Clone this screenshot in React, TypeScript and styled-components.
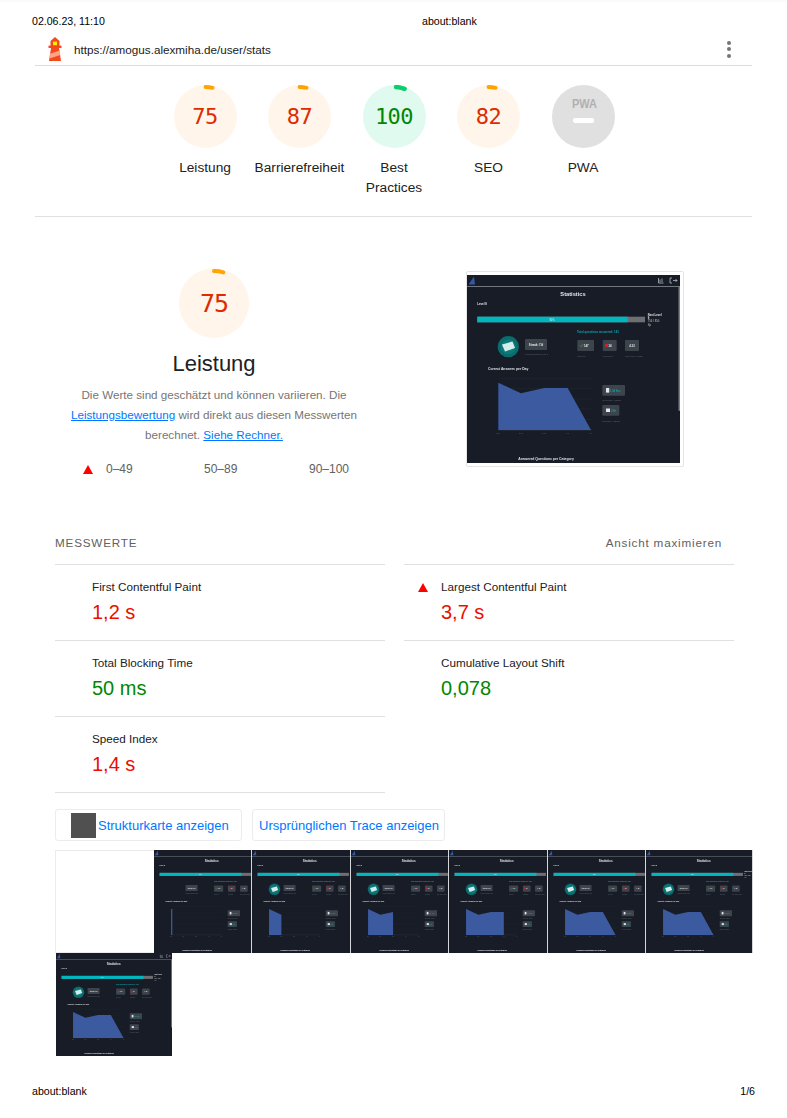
import React from "react";
import styled, { createGlobalStyle } from "styled-components";

const Global = createGlobalStyle`
  html, body { margin: 0; padding: 0; background: #fff; }
  body { font-family: "Liberation Sans", Arial, sans-serif; color: #212121; }
  * { box-sizing: border-box; }
`;

const Page = styled.div`
  width: 787px;
  height: 1118px;
  overflow: hidden;
  background: #fff;
  box-shadow: inset 0 2px 0 #fafafa;
  display: flex;
  flex-direction: column;
`;

const PrintHeader = styled.div`
  display: grid;
  grid-template-columns: 390px auto;
  padding: 15px 0 0 32px;
  height: 33px;
  font-size: 10.6px;
  line-height: 13px;
  color: #000;
`;

const TopBar = styled.div`
  height: 33px;
  margin: 0 35px;
  padding: 0 19px 0 12px;
  display: flex;
  align-items: center;
  border-bottom: 1px solid #dcdcdc;
`;

const Url = styled.span`
  margin-left: 11px;
  flex: 1;
  font-size: 11.7px;
  color: #212121;
`;

const Dots = styled.div`
  display: flex;
  flex-direction: column;
  gap: 2.5px;
  margin-right: 2px;
  span {
    width: 4px;
    height: 4px;
    border-radius: 50%;
    background: #757575;
  }
`;

const Summary = styled.div`
  height: 151px;
  margin: 0 35px;
  padding: 19px 0 0 1px;
  display: flex;
  justify-content: center;
  border-bottom: 1px solid #e0e0e0;
`;

const GaugeCell = styled.div`
  width: 94.5px;
  display: flex;
  flex-direction: column;
  align-items: center;
  text-align: center;
`;

const GaugeLabel = styled.div`
  margin-top: 10px;
  padding: 0 2px;
  font-size: 13.7px;
  line-height: 20px;
  white-space: pre-line;
  color: #212121;
`;

const GaugeWrap = styled.div<{ $size: number }>`
  position: relative;
  width: ${(p) => p.$size}px;
  height: ${(p) => p.$size}px;
  flex: none;
  svg { display: block; }
`;

const GaugeNumber = styled.div<{ $color: string; $font: number; $track: number }>`
  position: absolute;
  inset: 0;
  display: flex;
  align-items: center;
  justify-content: center;
  font-family: "DejaVu Sans Mono", monospace;
  font-size: ${(p) => p.$font}px;
  letter-spacing: ${(p) => p.$track}px;
  color: ${(p) => p.$color};
`;

const Overview = styled.section`
  display: flex;
  height: 310px;
  padding: 51px 0 0 60px;
`;

const OverviewText = styled.div`
  width: 308px;
  display: flex;
  flex-direction: column;
  align-items: center;
`;

const BigTitle = styled.h1`
  margin: 13px 0 0;
  font-size: 22px;
  line-height: 26px;
  font-weight: 400;
  color: #212121;
`;

const Description = styled.p`
  margin: 8px 0 0;
  width: 308px;
  text-align: center;
  font-size: 11.65px;
  line-height: 20px;
  color: #757575;
`;

const Link = styled.a`
  color: #0077ff;
  text-decoration: underline;
`;

const Legend = styled.div`
  margin-top: 14px;
  width: 100%;
  height: 20px;
  display: grid;
  grid-template-columns: 23px 98px 105px auto;
  padding-left: 23px;
  align-items: center;
  font-size: 12px;
  color: #616161;
`;

const Triangle = styled.span`
  width: 0;
  height: 0;
  border-left: 5px solid transparent;
  border-right: 5px solid transparent;
  border-bottom: 9px solid #ff0000;
`;

const ShotFrame = styled.div`
  margin: 3px 0 0 98px;
  width: 218px;
  height: 196px;
  padding: 3px 3px 3px 0;
  border: 1px solid #e4e4e4;
  border-radius: 2px;
  background: #fff;
  display: flex;
  flex-direction: column;
  justify-content: center;
  align-items: center;
  svg { display: block; filter: blur(0.35px); }
`;

const MetricsHead = styled.div`
  margin: 0 65px 0 55px;
  height: 37px;
  display: flex;
  justify-content: space-between;
  font-size: 11.7px;
  line-height: 14px;
  color: #616161;
  letter-spacing: 0.8px;
  padding-top: 9px;
`;

const MetricsGrid = styled.div`
  margin: 0 53px 0 55px;
  display: grid;
  grid-template-columns: 330px 330px;
  column-gap: 19px;
`;

const Metric = styled.div`
  position: relative;
  height: 76px;
  border-top: 1px solid #e0e0e0;
  padding: 15px 0 0 37px;
`;

const LastRule = styled.div`
  width: 330px;
  height: 1px;
  background: #e0e0e0;
`;

const MetricIcon = styled(Triangle)`
  position: absolute;
  left: 14px;
  top: 18px;
`;

const MetricName = styled.div`
  font-size: 11.7px;
  line-height: 14px;
  color: #212121;
`;

const MetricValue = styled.div<{ $good?: boolean }>`
  margin-top: 5px;
  font-size: 20px;
  line-height: 26px;
  color: ${(p) => (p.$good ? "#008800" : "#eb0f00")};
`;

const Buttons = styled.div`
  margin: 16px 0 0 55px;
  display: flex;
  gap: 10px;
`;

const ButtonBox = styled.div<{ $w: number }>`
  width: ${(p) => p.$w}px;
  height: 32px;
  padding: 0 6px;
  display: flex;
  align-items: center;
  border: 1px solid #ececec;
  border-radius: 3px;
  font-size: 13px;
  white-space: nowrap;
  color: #0077ff;
  background: #fff;
`;

const TreeSwatch = styled.span`
  width: 25px;
  height: 25px;
  margin: 0 2px 0 9px;
  background: #505050;
`;

const FilmStrip = styled.div`
  margin: 9px 0 0 55px;
  width: 698px;
  display: flex;
  flex-wrap: wrap;
`;

const Frame = styled.div<{ $w: number }>`
  width: ${(p) => p.$w}px;
  height: 103px;
  overflow: hidden;
  flex: none;
  border-right: 1px solid #d4d6d9;
  svg { display: block; filter: blur(0.4px); }
`;

const LastFrame = styled.div`
  width: 116px;
  height: 103px;
  margin-left: 1px;
  overflow: hidden;
  flex: none;
  svg { display: block; filter: blur(0.4px); }
`;

const BlankFrame = styled.div`
  width: 99px;
  height: 103px;
  border: 1px solid #ececec;
  border-right: 0;
  background: #fff;
`;

const PrintFooter = styled.div`
  position: absolute;
  left: 32px;
  top: 1085px;
  width: 723px;
  display: flex;
  justify-content: space-between;
  font-size: 10.6px;
  line-height: 13px;
  color: #000;
`;

const LighthouseLogo = () => (
  <svg width="16" height="24" viewBox="0 0 16 24">
    <path d="M4 11h8l2 13H2z" fill="#f4481e" />
    <path d="M3 16.8 12.6 13.6 13.4 18 2.4 21.4z" fill="#ffa385" />
    <path d="M1.5 8.6h13V11h-13z" fill="#f4481e" />
    <path d="M8 0l4.5 4V9h-9V4z" fill="#f4481e" />
    <path d="M6 4.6h4v3.6H6z" fill="#fff000" />
  </svg>
);

type GaugeProps = { size: number; r: number; sw: number; start: number; end: number; bg: string; arc: string; color: string; font: number; track: number; value: string };

const Gauge = ({ size, r, sw, start, end, bg, arc, color, font, track, value }: GaugeProps) => {
  const c = size / 2;
  const a = (deg: number) => {
    const t = (deg * Math.PI) / 180;
    return `${c + r * Math.sin(t)} ${c - r * Math.cos(t)}`;
  };
  return (
    <GaugeWrap $size={size}>
      <svg width={size} height={size}>
        <circle cx={c} cy={c} r={c} fill={bg} />
        <path d={`M${a(start)}A${r} ${r} 0 0 1 ${a(end)}`} fill="none" stroke={arc} strokeWidth={sw} strokeLinecap="round" />
      </svg>
      <GaugeNumber $color={color} $font={font} $track={track}>{value}</GaugeNumber>
    </GaugeWrap>
  );
};

const PwaGauge = () => (
  <GaugeWrap $size={63}>
    <svg width="63" height="63" viewBox="0 0 63 63">
      <circle cx="31.5" cy="31.5" r="31.5" fill="#e0e0e0" />
      <text x="20" y="22.5" textLength="25" lengthAdjust="spacingAndGlyphs" fontFamily="Liberation Sans" fontWeight="700" fontSize="12" fill="#b0b0b0">PWA</text>
      <rect x="21" y="33" width="21" height="5" rx="2" fill="#fff" />
    </svg>
  </GaugeWrap>
);

type ShotProps = { width: number; height: number; area: string; avatar?: boolean; next?: boolean; icons?: boolean };

const StatRect = ({ x, y, w, h }: { x: number; y: number; w: number; h: number }) => (
  <rect x={x} y={y} width={w} height={h} rx="1" fill="#3d444c" />
);

const Shot = ({ width, height, area, avatar = true, next = true, icons = true }: ShotProps) => (
  <svg width={width} height={height} viewBox="0 0 213 188" preserveAspectRatio="none" fontFamily="Liberation Sans">
    <rect width="213" height="188" fill="#171c26" />
    <rect y="11" width="213" height="0.8" fill="#8a8f96" />
    <path d="M1.5 9.5 7 1.5 8 9.5z" fill="#3557a8" />
    {icons && (
      <g stroke="#c9ccd0" strokeWidth="0.7" fill="none">
        <path d="M191.5 3v5h5M193 7V4.5M195 7V3.5" />
        <path d="M205 3h-2v5h2M206 5.5h4M208.5 4l1.5 1.5L208.5 7" />
      </g>
    )}
    <text x="106" y="21" textAnchor="middle" fontSize="5.7" fontWeight="700" fill="#e4e6e8">Statistics</text>
    <text x="10.3" y="30" fontSize="2.8" fontWeight="700" fill="#e4e6e8">Level 8</text>
    <rect x="10.3" y="41.7" width="167.7" height="5.6" fill="#6d6f72" />
    <rect x="10.3" y="41.7" width="150.4" height="5.6" fill="#00b6bf" />
    <text x="85" y="45.5" textAnchor="middle" fontSize="2.6" fill="#d8f4f5">90%</text>
    {next && (
      <g fontSize="2.8" fill="#e4e6e8">
        <text x="180.7" y="40.5" fontWeight="700">Next Level</text>
        <text x="180.7" y="43.8" fontWeight="700">9</text>
        <text x="180.7" y="47.2" fill="#c4c6c8">756 / 850</text>
        <text x="180.7" y="50.5" fill="#c4c6c8">Xp</text>
      </g>
    )}
    <text x="110" y="57.7" fontSize="2.9" fontWeight="700" fill="#06a6ae">Total questions answered: 181</text>
    {avatar && (
      <g>
        <circle cx="41.3" cy="71.7" r="10.6" fill="#0a6c6c" />
        <circle cx="41.3" cy="71.7" r="7.5" fill="#0d7a7a" />
        <path d="M35 69.5 45.5 66.5 48 73 38 76.5z" fill="#d4ecec" />
      </g>
    )}
    <StatRect x={58} y={64} w={22} h={11} />
    <text x="69" y="70.8" textAnchor="middle" fontSize="2.8" fontWeight="700" fill="#e4e6e8">Streak: 7/d</text>
    <text x="58" y="80.3" fontSize="2.5" fill="#5f6670">Longest Streak: 21 d</text>
    <StatRect x={110.3} y={65} w={16.7} h={11} />
    <path d="M113 70.5l1.2 1.2 2-2.4" stroke="#35b34a" strokeWidth="0.7" fill="none" />
    <text x="117" y="71.8" fontSize="2.8" fontWeight="700" fill="#e4e6e8">147</text>
    <StatRect x={135.7} y={65} w={14} h={11} />
    <rect x="138" y="69" width="3" height="3" fill="#d11f2f" />
    <text x="141.5" y="71.8" fontSize="2.8" fontWeight="700" fill="#e4e6e8">34</text>
    <StatRect x={158} y={65} w={14} h={11} />
    <text x="165" y="71.8" textAnchor="middle" fontSize="2.8" fontWeight="700" fill="#e4e6e8">4.32</text>
    <g fontSize="2.5" fill="#5f6670">
      <text x="110.3" y="81.7">Correct</text>
      <text x="135.7" y="81.7">Incorrect</text>
      <text x="158" y="81.7">Cor./Incor. Ratio</text>
    </g>
    <text x="21" y="95.3" fontSize="3.4" fontWeight="700" fill="#dfe2e5">Correct Answers per Day</text>
    <g stroke="#2a303a" strokeWidth="0.4">
      <path d="M31.3 103.3H124.7M31.3 113.3H124.7M31.3 124H124.7M31.3 134H124.7M31.3 144.3H124.7" />
    </g>
    <path d="M31.3 155H124.7" stroke="#4a5060" strokeWidth="0.4" />
    <path d={area} fill="#3b5a9f" />
    <g fontSize="2" fill="#59606a" textAnchor="middle">
      <text x="31.3" y="159">29.5</text>
      <text x="54" y="159">30.5</text>
      <text x="77.3" y="159">31.5</text>
      <text x="100.7" y="159">1.6</text>
      <text x="124" y="159">2.6</text>
    </g>
    <StatRect x={135.3} y={110} w={22.7} h={10.7} />
    <rect x="139" y="113" width="3.2" height="4.6" fill="#e4e6e8" />
    <text x="143" y="116.5" fontSize="2.6" fontWeight="700" fill="#06a6ae">1.04 Sec</text>
    <text x="135.3" y="126.3" fontSize="2.5" fill="#5f6670">Quickest Answer</text>
    <StatRect x={135.3} y={130} w={17} h={10.7} />
    <rect x="139" y="133.5" width="4" height="3.5" fill="#e4e6e8" />
    <text x="144" y="136.5" fontSize="2.6" fontWeight="700" fill="#06a6ae">3 Hr</text>
    <text x="135.3" y="146.7" fontSize="2.5" fill="#5f6670">Slowest Answer</text>
    <text x="79" y="184.5" textAnchor="middle" fontSize="3.4" fontWeight="700" fill="#dfe2e5">Answered Questions per Category</text>
    <rect x="211.5" y="11.8" width="1.5" height="124" fill="#7c8086" />
  </svg>
);

const A1 = "M31.3 107.7H33.6V155H31.3z";
const A2 = "M31.3 107.7L54 118.3V155H31.3z";
const A3 = "M31.3 107.7L54 118.3L77.3 113V155H31.3z";
const A4 = "M31.3 107.7L54 118.3L77.3 113H100.7V155H31.3z";
const A5 = "M31.3 107.7L54 118.3L77.3 113H100.7L124 155H31.3z";

const ORANGE_BG = "#fff5eb";
const RED = "#dd2c00";

const gauges = [
  { label: "Leistung", value: "75" },
  { label: "Barrierefreiheit", value: "87" },
  { label: "Best\nPractices", value: "100", good: true },
  { label: "SEO", value: "82" },
];

const metrics = [
  { name: "First Contentful Paint", value: "1,2 s" },
  { name: "Largest Contentful Paint", value: "3,7 s", flag: true },
  { name: "Total Blocking Time", value: "50 ms", good: true },
  { name: "Cumulative Layout Shift", value: "0,078", good: true },
  { name: "Speed Index", value: "1,4 s" },
];

const frames = [
  { area: A1, avatar: false, w: 98.4 },
  { area: A2, w: 98.4 },
  { area: A3, w: 98.4 },
  { area: A4, w: 98.4 },
  { area: A5, w: 98.4 },
  { area: A5, next: true, w: 107 },
];

export default function App() {
  return (
    <Page>
      <Global />
      <PrintHeader>
        <span>02.06.23, 11:10</span>
        <span>about:blank</span>
      </PrintHeader>
      <TopBar>
        <LighthouseLogo />
        <Url>https://amogus.alexmiha.de/user/stats</Url>
        <Dots><span /><span /><span /></Dots>
      </TopBar>
      <Summary>
        {gauges.map((g) => (
          <GaugeCell key={g.label}>
            <Gauge
              size={63}
              r={29.5}
              sw={g.good ? 4.5 : 3.8}
              start={g.good ? 3 : 0}
              end={g.good ? 20 : 14}
              bg={g.good ? "#e0faf0" : ORANGE_BG}
              arc={g.good ? "#0cce6b" : "#ffa400"}
              color={g.good ? "#008800" : RED}
              font={22}
              track={-0.5}
              value={g.value}
            />
            <GaugeLabel>{g.label}</GaugeLabel>
          </GaugeCell>
        ))}
        <GaugeCell>
          <PwaGauge />
          <GaugeLabel>PWA</GaugeLabel>
        </GaugeCell>
      </Summary>
      <Overview>
        <OverviewText>
          <Gauge size={70} r={32} sw={4} start={0} end={17} bg={ORANGE_BG} arc="#ffa400" color={RED} font={25} track={-1} value="75" />
          <BigTitle>Leistung</BigTitle>
          <Description>
            Die Werte sind geschätzt und können variieren. Die <Link>Leistungsbewertung</Link> wird direkt aus diesen Messwerten berechnet. <Link>Siehe Rechner.</Link>
          </Description>
          <Legend>
            <Triangle />
            <span>0–49</span>
            <span>50–89</span>
            <span>90–100</span>
          </Legend>
        </OverviewText>
        <ShotFrame>
          <Shot width={213} height={188} area={A5} />
        </ShotFrame>
      </Overview>
      <MetricsHead>
        <span>MESSWERTE</span>
        <span>Ansicht maximieren</span>
      </MetricsHead>
      <MetricsGrid>
        {metrics.map((m) => (
          <Metric key={m.name}>
            {m.flag && <MetricIcon />}
            <MetricName>{m.name}</MetricName>
            <MetricValue $good={m.good}>{m.value}</MetricValue>
          </Metric>
        ))}
        <span />
        <LastRule />
      </MetricsGrid>
      <Buttons>
        <ButtonBox $w={187}><TreeSwatch />Strukturkarte anzeigen</ButtonBox>
        <ButtonBox $w={193}>Ursprünglichen Trace anzeigen</ButtonBox>
      </Buttons>
      <FilmStrip>
        <BlankFrame />
        {frames.map((f, i) => (
          <Frame key={i} $w={f.w}>
            <Shot width={116} height={103} area={f.area} avatar={f.avatar} next={!!f.next} icons={false} />
          </Frame>
        ))}
        <LastFrame>
          <Shot width={116} height={103} area={A5} />
        </LastFrame>
      </FilmStrip>
      <PrintFooter>
        <span>about:blank</span>
        <span>1/6</span>
      </PrintFooter>
    </Page>
  );
}
